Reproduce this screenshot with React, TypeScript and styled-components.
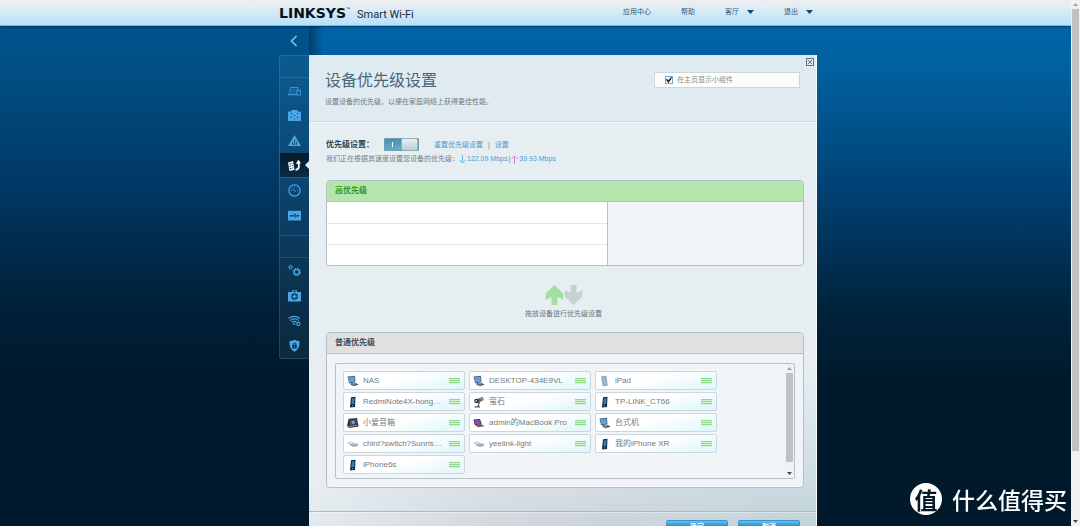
import React from 'react';
import styled, { createGlobalStyle, css } from 'styled-components';

const GlobalStyle = createGlobalStyle`
  *, *::before, *::after { box-sizing: border-box; }
  body {
    margin: 0;
    overflow: hidden;
    background: #001a2c;
    font-family: "Liberation Sans", "Noto Sans CJK SC", sans-serif;
    font-size: 7px;
    line-height: 12px;
    color: #6f7a80;
  }
  button { margin: 0; padding: 0; border: 0; background: none; font: inherit; color: inherit; cursor: pointer; }
  a { color: inherit; text-decoration: none; }
  ul, ol { margin: 0; padding: 0; list-style: none; }
  h1, h2, p { margin: 0; }
  svg { display: block; flex: none; }
`;

const Viewport = styled.div`
  display: grid;
  grid-template-columns: minmax(0, 1fr) 9px;
  height: 100vh;
`;

const Page = styled.div`
  overflow-y: auto;
  scrollbar-width: none;
  background:
    linear-gradient(90deg, rgba(0, 20, 40, 0.22) calc(50% - 227px), rgba(0, 15, 35, 0.4) calc(50% - 226px), transparent calc(50% - 212px)),
    linear-gradient(180deg, #0064a8 26px, #00619f 70px, #004477 180px, #00233c 310px, #001a2c 380px);
`;

const Container = styled.div`
  display: flex;
  width: 563px;
  max-width: 100%;
  margin: 0 auto;
  padding-left: 25px;
`;

const Header = styled.header`
  background: linear-gradient(180deg, #ededee 0, #e4eef4 6px, #b7e2fb 24px);
  border-bottom: 1px solid #7fb9dc;
  box-shadow: 0 1px 2px rgba(0, 30, 60, 0.6);
`;

const HeaderRow = styled(Container)`
  height: 25px;
  align-items: flex-start;
  padding-right: 4px;
`;

const Brand = styled.a`
  display: flex;
  align-items: baseline;
  padding-top: 4px;
  line-height: 18px;
  color: #0a1016;
`;

const Wordmark = styled.span`
  font-family: "DejaVu Sans", sans-serif;
  font-size: 14px;
  font-weight: 700;
`;

const Trademark = styled.sup`
  align-self: flex-start;
  padding-top: 2px;
  font-size: 4px;
  line-height: 6px;
`;

const Product = styled.span`
  margin-left: 7px;
  font-family: Roboto, sans-serif;
  font-size: 11px;
  color: #1c2b36;
`;

const TopNav = styled.nav`
  display: flex;
  gap: 30px;
  margin-left: auto;
  padding-top: 6px;
  color: #2d5f80;
`;

const MenuButton = styled.button`
  display: flex;
  align-items: center;
  gap: 8px;
`;

const Caret = styled.span`
  width: 7px;
  height: 4px;
  background: #0d4a72;
  clip-path: polygon(0 0, 100% 0, 50% 100%);
`;

const Sidebar = styled.aside`
  flex: none;
  width: 30px;
`;

const BackButton = styled.button`
  display: grid;
  place-items: center;
  width: 30px;
  height: 29px;
`;

const SideNav = styled.nav`
  border: 1px solid rgba(120, 190, 235, 0.2);
  border-right: 0;
  border-radius: 3px 0 0 3px;
  background: rgba(110, 180, 220, 0.1);
`;

const NavSpacer = styled.div`
  height: 21px;
`;

const NavGroup = styled.ul<{ $last?: boolean }>`
  border-top: 1px solid rgba(120, 190, 235, 0.18);
  ${(p) => !p.$last && css`
    padding-bottom: 7px;
    border-bottom: 1px solid rgba(120, 190, 235, 0.18);
  `}
`;

const NavLink = styled.a<{ $active?: boolean }>`
  display: grid;
  place-items: center;
  height: 25px;
  color: #49a7e6;
  ${(p) => p.$active && css`
    position: relative;
    color: #fff;
    background: linear-gradient(180deg, #04192a, #0b2c44);
    border-bottom: 1px solid rgba(130, 190, 225, 0.4);
    &::after {
      content: "";
      position: absolute;
      right: 0;
      top: 8px;
      width: 4px;
      height: 8px;
      background: #e8f0f4;
      clip-path: polygon(0 50%, 100% 0, 100% 100%);
    }
  `}
`;

const Panel = styled.main`
  position: relative;
  flex: 1;
  min-width: 0;
  margin-top: 29px;
  border-right: 1px solid #f7fbfd;
  background:
    radial-gradient(ellipse 300px 120px at 52% 100%, rgba(190, 197, 206, 0.75), rgba(190, 197, 206, 0) 100%),
    radial-gradient(ellipse 260px 180px at 100% 100%, rgba(180, 204, 212, 0.8), rgba(180, 204, 212, 0) 100%),
    #e6eef2;
`;

const CloseButton = styled.button`
  position: absolute;
  top: 3px;
  right: 2px;
`;

const PanelHeader = styled.header`
  display: flex;
  align-items: flex-start;
  justify-content: space-between;
  padding: 16px 16px 13px;
  background: #e0ebf1;
  border-bottom: 1px solid #cfdbe2;
  box-shadow: 0 1px 0 #f3f7f9;
`;

const Title = styled.h1`
  margin-bottom: 5px;
  font-size: 16px;
  font-weight: 400;
  line-height: 20px;
  color: #48667c;
`;

const WidgetOption = styled.label`
  display: flex;
  align-items: center;
  gap: 4px;
  width: 146px;
  height: 16px;
  margin-top: 1px;
  padding-left: 10px;
  border: 1px solid #cdd8de;
  background: #fcfdfb;
  color: #858d8f;
`;

const Checkbox = styled.input`
  appearance: none;
  display: grid;
  place-items: center;
  width: 8px;
  height: 8px;
  margin: 0;
  border: 1px solid #6fa9c6;
  background: #f2fafd;
  &:checked::after {
    content: "";
    width: 6px;
    height: 6px;
    background: #0c1c28;
    clip-path: polygon(0 45%, 18% 30%, 38% 58%, 85% 0, 100% 14%, 42% 100%);
  }
`;

const PanelBody = styled.div`
  padding: 16px 12px 23px 17px;
`;

const SettingRow = styled.div`
  display: flex;
  align-items: center;
  height: 13px;
`;

const SettingLabel = styled.label`
  width: 58px;
  font-size: 8px;
  font-weight: 700;
  color: #34444f;
`;

const Switch = styled.input`
  appearance: none;
  display: flex;
  align-items: center;
  justify-content: flex-end;
  width: 35px;
  height: 13px;
  margin: 0 15px 0 0;
  border: 1px solid #6f9cb0;
  border-radius: 1px;
  background: linear-gradient(#fff, #fff) 7px 3px / 1px 5px no-repeat, linear-gradient(180deg, #4a92b4, #64abc8);
  cursor: pointer;
  &::after {
    content: "";
    width: 17px;
    height: 13px;
    border: 1px solid #98acb4;
    border-radius: 2px;
    background: linear-gradient(180deg, #e6f1f3, #b9d0d6);
  }
`;

const Actions = styled.div`
  display: flex;
  gap: 5px;
  color: #4a9ad2;
`;

const Divider = styled.span`
  color: #5e7f95;
`;

const SpeedLine = styled.p`
  display: flex;
  align-items: center;
  margin: 2px 0 15px;
  color: #75828a;
`;

const Speed = styled.span`
  display: flex;
  align-items: center;
  gap: 1px;
  color: #4a9ad2;
`;

const Box = styled.section`
  border: 1px solid #b2c0ca;
  border-radius: 4px;
  overflow: hidden;
  background: #f0f4f8;
`;

const BoxTitle = styled.h2<{ $tone: 'high' | 'normal' }>`
  height: 21px;
  padding-left: 8px;
  border-bottom: 1px solid #b2c0ca;
  font-size: 8px;
  font-weight: 700;
  line-height: 20px;
  ${(p) => p.$tone === 'high'
    ? css`background: #b5e4ad; color: #2f9a2a;`
    : css`background: #e0e0e0; color: #3f4f5a;`}
`;

const Slots = styled.ol`
  width: 59%;
  border-right: 1px solid #b2c0ca;
  background: #fff;
`;

const Slot = styled.li`
  height: 21px;
  & + & {
    border-top: 1px solid #e2e6e9;
  }
`;

const DragHint = styled.div`
  display: flex;
  flex-direction: column;
  align-items: center;
  gap: 3px;
  padding: 19px 3px 12px 0;
  color: #6a757b;
`;

const ListFrame = styled.div`
  display: grid;
  grid-template-columns: minmax(0, 1fr) 9px;
  height: 116px;
  margin: 9px 8px 8px;
  border: 1px solid #b6c2ca;
  border-radius: 2px;
  background: #f2f5f8;
`;

const DeviceList = styled.ul`
  display: grid;
  grid-template-columns: repeat(3, 122px);
  grid-auto-rows: 19px;
  gap: 2px 4px;
  padding: 7px 7px 0;
`;

const Device = styled.li`
  display: grid;
  grid-template-columns: 12px minmax(0, 1fr) 11px;
  align-items: center;
  column-gap: 4px;
  padding: 0 4px 0 3px;
  border: 1px solid #cbd7de;
  border-radius: 2px;
  background: linear-gradient(165deg, #fff 45%, #ddf6fb 100%);
  font-size: 8px;
  color: #737a7e;
`;

const DeviceName = styled.span`
  overflow: hidden;
  text-overflow: ellipsis;
  white-space: nowrap;
`;

const Grip = styled.button`
  width: 11px;
  height: 6px;
  background: repeating-linear-gradient(180deg, #8fd98a 0 1px, #d6f2d4 1px 2px);
`;

const Scrollbar = styled.div`
  display: grid;
  grid-template-rows: 9px minmax(0, 1fr) 9px;
  background: #f1f1f1;
`;

const ScrollArrow = styled.button<{ $down?: boolean }>`
  place-self: center;
  width: 5px;
  height: 3px;
  background: ${(p) => (p.$down ? '#40454a' : '#9da1a4')};
  clip-path: ${(p) => (p.$down ? 'polygon(0 0, 100% 0, 50% 100%)' : 'polygon(50% 0, 100% 100%, 0 100%)')};
`;

const Thumb = styled.div<{ $extent: number }>`
  height: ${(p) => p.$extent}%;
  margin: 0 1px;
  background: #c1c1c1;
`;

const PanelFooter = styled.footer`
  display: flex;
  justify-content: flex-end;
  gap: 10px;
  padding: 8px 16px 12px;
  border-top: 1px solid #a9b9c1;
  box-shadow: inset 0 1px 0 rgba(255, 255, 255, 0.4);
`;

const FormButton = styled.button`
  display: flex;
  justify-content: center;
  width: 62px;
  height: 15px;
  border: 1px solid #3c93cb;
  border-radius: 2px;
  background: linear-gradient(180deg, #6cc4ee 0, #3796d3 4px, #2b86c6);
  font-weight: 700;
  line-height: 11px;
  color: #fff;
`;

const Watermark = styled.div`
  position: fixed;
  right: 13px;
  bottom: 11px;
  display: flex;
  align-items: center;
  gap: 10px;
  font-family: "Noto Sans CJK SC", sans-serif;
  font-size: 23px;
  font-weight: 500;
  line-height: 32px;
  color: #fff;
`;

const WatermarkSeal = styled.span`
  display: grid;
  place-items: center;
  width: 32px;
  height: 32px;
  border-radius: 50%;
  background: #fff;
  color: #04192a;
  line-height: 30px;
  font-weight: 700;
`;

const GearShape = ({ x, y, r, w }: { x: number; y: number; r: number; w: number }) => (
  <g fill="none" stroke="currentColor">
    <circle cx={x} cy={y} r={r} strokeWidth={w} />
    <circle cx={x} cy={y} r={r + w * 0.8} strokeWidth={w * 0.7} strokeDasharray={`${((r + w * 0.8) * Math.PI) / 8}`} />
  </g>
);

type NavName = 'devices' | 'guest' | 'parental' | 'priority' | 'speed' | 'storage' | 'connectivity' | 'troubleshoot' | 'wireless' | 'security';

const navShapes: Record<NavName, React.ReactNode> = {
  devices: (
    <g fill="none" stroke="currentColor" opacity="0.8">
      <path d="M2 9V3.500h8V6" />
      <path d="M0 10.500h9" strokeWidth="1.600" />
      <rect x="9" y="6.500" width="3.500" height="4.500" />
      <path d="M3 4.500h6v4H3z" fill="currentColor" stroke="none" opacity="0.3" />
    </g>
  ),
  guest: (
    <>
      <path d="M3.500 2.500V1h6v1.500H12q1 0 1 1V11q0 1-1 1H1q-1 0-1-1V3.500q0-1 1-1z" fill="currentColor" />
      <path d="M3 4.500h1.300M8.800 4.500H10M2.500 8.300h1.500M9 8.300h1.500M5.900 6.500h1.200M6.500 9.500v1" stroke="#145684" />
    </>
  ),
  parental: (
    <>
      <path d="M6.500 1L13 12H0z" fill="currentColor" />
      <path d="M4.700 8v3M6.500 5.500V8M6.500 9v2M8.300 7.500V11" stroke="#0f4468" />
    </>
  ),
  priority: (
    <>
      <path d="M0 3.500l5-1.500 1.500 8.700L1.500 12z" fill="currentColor" />
      <path d="M1.200 5.200l1.300-.3M3.600 4.600l1-.2M1.600 7.400l1.300-.3M4 6.800l1-.2M2 9.700l1.300-.3M4.400 9.100l1-.2" stroke="#0a2438" />
      <path d="M7.500 10.800q3.700-.3 3.300-4V3.500" fill="none" stroke="currentColor" strokeWidth="1.800" />
      <path d="M7.800 5L10.300.8 13 4.300z" fill="currentColor" />
    </>
  ),
  speed: (
    <g fill="none" stroke="currentColor">
      <circle cx="6.500" cy="6.500" r="5.600" strokeWidth="1.200" />
      <path d="M4.500 4.500l3 3.200M6.500 2.600v.8M10 6.500h-.8M3 6.500h.8M9 4l-.5.500" />
    </g>
  ),
  storage: (
    <>
      <path d="M0 1.800h13v9.700H0z" fill="currentColor" />
      <path d="M2 6.800h8.500M4.500 6.800L6 5.300h2M5.500 6.800L7 8.300h1.500" fill="none" stroke="#0b334f" strokeWidth="0.800" />
      <circle cx="2.800" cy="6.800" r="0.900" fill="#0b334f" />
      <path d="M9.500 5.500l2 1.300-2 1.300z" fill="#0b334f" />
    </>
  ),
  connectivity: (
    <>
      <GearShape x={2.600} y={3.200} r={1.400} w={1} />
      <GearShape x={8.800} y={8} r={2.600} w={1.400} />
    </>
  ),
  troubleshoot: (
    <>
      <path d="M4 3V1.200h5V3h4v9.500H0V3z" fill="currentColor" />
      <path d="M5 3v-.8h3V3z" fill="#0a2a42" />
      <circle cx="6.500" cy="7.500" r="3.200" fill="#0b2b43" />
      <path d="M6.500 5.300v4.400M4.300 7.500h4.400" stroke="currentColor" strokeWidth="1.400" />
    </>
  ),
  wireless: (
    <g fill="none" stroke="currentColor" strokeWidth="1.100">
      <path d="M.5 4.500Q6 .2 12 4.500M2 6.700Q6.200 3.200 10.800 6.500M3.800 8.600Q6.200 6.500 8.500 8" />
      <circle cx="10.300" cy="10" r="1.600" />
      <circle cx="6.300" cy="10" r="0.500" />
    </g>
  ),
  security: (
    <>
      <path d="M6.500.8Q9 2.200 11.500 2q.5 8-5 10.800Q1 10 1.500 2 4 2.200 6.500.8z" fill="currentColor" />
      <path d="M4.300 6h4.400v3.500H4.300z" fill="#0b2b43" />
      <path d="M5.200 6V4.800q1.300-1.800 2.600 0V6" fill="none" stroke="#0b2b43" />
      <path d="M6.500 7v1.500" stroke="currentColor" />
    </>
  ),
};

type DeviceKind = 'desktop' | 'phone' | 'tablet' | 'camera' | 'speaker' | 'laptop' | 'plug';

const deviceShapes: Record<DeviceKind, React.ReactNode> = {
  desktop: (
    <>
      <path d="M.5 1.500l7.500-.7.500 6.700-6.500.7z" fill="#4a6480" />
      <path d="M1.300 2.200l6-.5.400 5-5.300.5z" fill="#5aa3e0" />
      <path d="M3.500 8l2.500-.3 1 1.300 3-.5 1.500 1.300L7 11.300 3.500 10z" fill="#69737b" />
      <path d="M7.500 8.500l3 1" stroke="#39434b" />
    </>
  ),
  phone: (
    <>
      <path d="M4 1.200L8.500.8 8 11l-5 .5z" fill="#17293b" />
      <path d="M4.900 2.600l2.700-.3-.4 5.700-2.700.3z" fill="#2f7fb5" />
      <path d="M5 9.800l1.200-.1" stroke="#8fa4b2" />
    </>
  ),
  tablet: (
    <>
      <path d="M2 1.200L7.500.8l1.300 10-5 .7z" fill="#9fb0bd" />
      <path d="M3 2.200l3.800-.3 1 7.800-3.700.5z" fill="#7fa9c6" />
      <path d="M4.200 4l2-.2M4.500 6l2-.2M4.800 8l2-.2" stroke="#c4d9e6" />
    </>
  ),
  camera: (
    <>
      <path d="M3 3.500L9.500.8 11 4 5 7z" fill="#6a6f73" />
      <circle cx="3.500" cy="5" r="2.300" fill="#2f3336" />
      <circle cx="3.200" cy="5" r="0.900" fill="#c9d0d4" />
      <path d="M6.500 6L5 10.500M1.500 10.800H7" stroke="#55595c" strokeWidth="1.200" />
      <path d="M8.500 2.200l1 2.300" stroke="#bcc2c6" />
    </>
  ),
  speaker: (
    <>
      <path d="M1.500 1.800L10 1l1.500 8.500L2 11 0 9z" fill="#3a3634" />
      <path d="M2.500 3l6.500-.7.8 5.200-6.800 1z" fill="#33527c" />
      <circle cx="6.200" cy="5.300" r="1.600" fill="#8ea5bd" />
      <path d="M1 9.500l9-1.100" stroke="#a08862" />
    </>
  ),
  laptop: (
    <>
      <path d="M.5 2.500L7 2l1.800 5.500-7 .5z" fill="#30264a" />
      <path d="M1.300 3.200l5.200-.4 1.300 4-5.500.5z" fill="#9446c8" />
      <path d="M2 8l7-.5 2.500 1.700L5 10.200z" fill="#5d6468" />
    </>
  ),
  plug: (
    <>
      <path d="M.5 4.500l4-1 3 1.800 4 .4-1 2-4 .8-4-2z" fill="#a9b8c0" />
      <path d="M1.500 4.700l3-.6 2 1.300-2.500.8z" fill="#dfe8ec" />
      <path d="M3 6.800l3.500 1.600 4-.8" fill="none" stroke="#7c8b94" strokeWidth="0.700" />
    </>
  ),
};

const mainNav: [NavName, string][] = [
  ['devices', '设备列表'],
  ['guest', '访客访问'],
  ['parental', '家长控制'],
  ['priority', '设备优先级设置'],
  ['speed', '速度测试'],
  ['storage', '外部存储'],
];

const settingsNav: [NavName, string][] = [
  ['connectivity', '连接'],
  ['troubleshoot', '故障排除'],
  ['wireless', '无线'],
  ['security', '安全'],
];

const devices: [DeviceKind, string][] = [
  ['desktop', 'NAS'],
  ['desktop', 'DESKTOP-434E9VL'],
  ['tablet', 'iPad'],
  ['phone', 'RedmiNote4X-hong…'],
  ['camera', '萤石'],
  ['phone', 'TP-LINK_CT66'],
  ['speaker', '小爱音箱'],
  ['laptop', 'admin的MacBook Pro'],
  ['desktop', '台式机'],
  ['plug', 'chint?switch?Sunris…'],
  ['plug', 'yeelink-light'],
  ['phone', '我的iPhone XR'],
  ['phone', 'iPhone6s'],
];

const NavItems = ({ items }: { items: [NavName, string][] }) => (
  <>
    {items.map(([name, label]) => (
      <li key={name}>
        <NavLink href={`#${name}`} aria-label={label} $active={name === 'priority'}>
          <svg width="13" height="13" viewBox="0 0 13 13">{navShapes[name]}</svg>
        </NavLink>
      </li>
    ))}
  </>
);

const SpeedArrow = ({ up }: { up?: boolean }) => (
  <svg width="7" height="9" viewBox="0 0 7 9" fill="none" stroke={up ? '#df7fd0' : '#6cb6e6'}>
    <path d={up ? 'M3.500 9V1M.5 4l3-3 3 3' : 'M3.500 0v8M.5 5l3 3 3-3'} />
  </svg>
);

export default function App() {
  return (
    <>
      <GlobalStyle />
      <Viewport lang="zh-CN">
        <Page>
          <Header>
            <HeaderRow>
              <Brand href="#home">
                <Wordmark>LINKSYS</Wordmark>
                <Trademark>™</Trademark>
                <Product>Smart Wi-Fi</Product>
              </Brand>
              <TopNav>
                <a href="#apps">应用中心</a>
                <a href="#help">帮助</a>
                <MenuButton>客厅<Caret /></MenuButton>
                <MenuButton>退出<Caret /></MenuButton>
              </TopNav>
            </HeaderRow>
          </Header>
          <Container>
            <Sidebar>
              <BackButton aria-label="返回">
                <svg width="8" height="12" viewBox="0 0 8 12" fill="none" stroke="#7cc4ee" strokeWidth="1.600">
                  <path d="M6.500 1l-5 5 5 5" />
                </svg>
              </BackButton>
              <SideNav>
                <NavSpacer />
                <NavGroup><NavItems items={mainNav} /></NavGroup>
                <NavSpacer />
                <NavGroup $last><NavItems items={settingsNav} /></NavGroup>
              </SideNav>
            </Sidebar>
            <Panel>
              <PanelHeader>
                <div>
                  <Title>设备优先级设置</Title>
                  <p>设置设备的优先级，以便在家庭网络上获得更佳性能。</p>
                </div>
                <WidgetOption>
                  <Checkbox type="checkbox" defaultChecked />
                  在主页显示小组件
                </WidgetOption>
              </PanelHeader>
              <CloseButton aria-label="关闭">
                <svg width="8" height="8" viewBox="0 0 8 8" fill="none" stroke="#5d7482">
                  <rect x="0.500" y="0.500" width="7" height="7" />
                  <path d="M2 2l4 4M6 2L2 6" />
                </svg>
              </CloseButton>
              <PanelBody>
                <SettingRow>
                  <SettingLabel htmlFor="prioritization">优先级设置：</SettingLabel>
                  <Switch id="prioritization" type="checkbox" role="switch" defaultChecked />
                  <Actions>
                    <a href="#reset">重置优先级设置</a>
                    <Divider>|</Divider>
                    <a href="#settings">设置</a>
                  </Actions>
                </SettingRow>
                <SpeedLine>
                  我们正在根据其速度设置您设备的优先级：
                  <Speed>
                    <SpeedArrow />122.09 Mbps<Divider>|</Divider><SpeedArrow up />39.93 Mbps
                  </Speed>
                </SpeedLine>
                <Box>
                  <BoxTitle $tone="high">高优先级</BoxTitle>
                  <Slots>
                    <Slot />
                    <Slot />
                    <Slot />
                  </Slots>
                </Box>
                <DragHint>
                  <svg width="38" height="20" viewBox="0 0 38 20">
                    <path d="M9.500 0L18.300 8.500V15L12.500 12V20h-6v-8L.7 15V8.500z" fill="#a5dfa0" />
                    <path d="M28.500 20l8.800-8.500V5L31.500 8V0h-6v8L19.700 5v6.500z" fill="#c8d0d6" />
                  </svg>
                  拖放设备进行优先级设置
                </DragHint>
                <Box>
                  <BoxTitle $tone="normal">普通优先级</BoxTitle>
                  <ListFrame>
                    <DeviceList>
                      {devices.map(([kind, name]) => (
                        <Device key={name}>
                          <svg width="12" height="12" viewBox="0 0 12 12">{deviceShapes[kind]}</svg>
                          <DeviceName>{name}</DeviceName>
                          <Grip aria-label={`拖动 ${name}`} />
                        </Device>
                      ))}
                    </DeviceList>
                    <Scrollbar>
                      <ScrollArrow aria-label="向上滚动" />
                      <Thumb $extent={93} />
                      <ScrollArrow $down aria-label="向下滚动" />
                    </Scrollbar>
                  </ListFrame>
                </Box>
              </PanelBody>
              <PanelFooter>
                <FormButton>确定</FormButton>
                <FormButton>取消</FormButton>
              </PanelFooter>
            </Panel>
          </Container>
        </Page>
        <Scrollbar>
          <ScrollArrow aria-label="向上滚动" />
          <Thumb $extent={87} />
          <ScrollArrow $down aria-label="向下滚动" />
        </Scrollbar>
      </Viewport>
      <Watermark>
        <WatermarkSeal>值</WatermarkSeal>
        什么值得买
      </Watermark>
    </>
  );
}
